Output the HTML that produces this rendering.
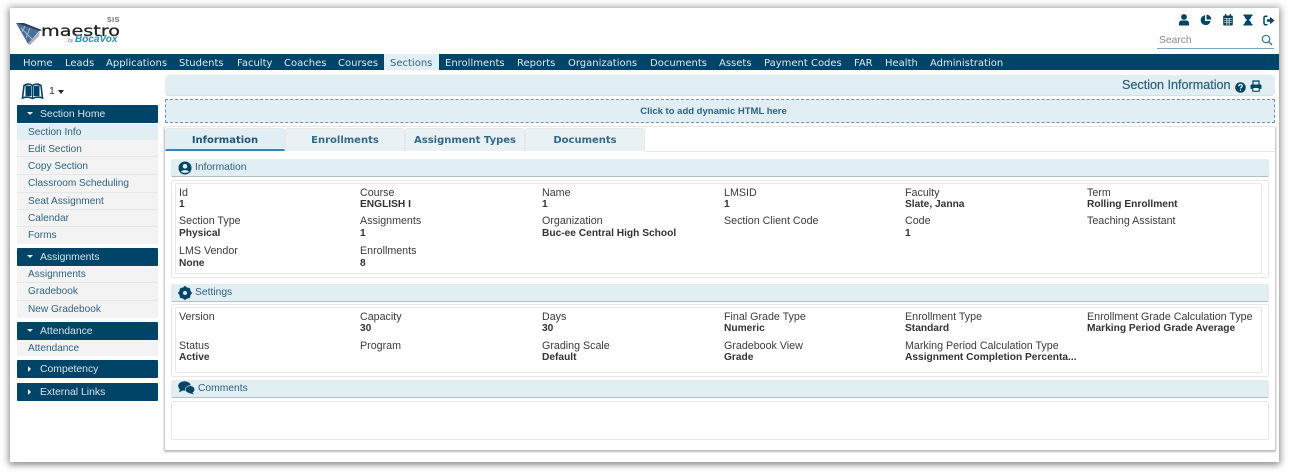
<!DOCTYPE html>
<html><head><meta charset="utf-8"><style>
html,body{margin:0;padding:0;background:#fff;width:1290px;height:474px;overflow:hidden}
body{font-family:"Liberation Sans",sans-serif;position:relative;filter:blur(.35px)}
#w{position:absolute;left:10px;top:8px;width:1269px;height:454px;background:#fff;box-shadow:0 0 7px 2px rgba(0,0,0,.28),0 3px 6px rgba(0,0,0,.25)}
.a{position:absolute;white-space:nowrap}
.n{position:absolute;top:55px;height:16px;font:10px/17px "DejaVu Sans",sans-serif;color:#dfe9ef;white-space:nowrap}
.h{position:absolute;left:17px;width:141px;height:18px;background:#004567;color:#d8e4ea;font-size:10.4px;line-height:20px;border-radius:1px}
.h span{position:absolute;left:23px}
.h i{position:absolute;left:10px}
.dn{top:7px;width:0;height:0;border-left:3px solid transparent;border-right:3px solid transparent;border-top:3px solid #e8eef2}
.rt{top:6px;width:0;height:0;border-top:3px solid transparent;border-bottom:3px solid transparent;border-left:3px solid #e8eef2;left:11px!important}
.s{position:absolute;left:17px;width:141px;background:#f3f3f3;border-bottom:1px solid #e6e6e6;box-sizing:border-box;color:#2f6285;font-size:10.1px}
.s span{position:absolute;left:11px;top:1px;white-space:nowrap}
.t{position:absolute;top:128px;width:119px;height:23px;background:#e9f1f5;border:1px solid #e8e8e8;border-bottom:none;box-sizing:border-box;border-radius:3px 3px 0 0;font:bold 10px/23px "DejaVu Sans",sans-serif;color:#34698c;text-align:center}
.sh{position:absolute;left:171px;width:1098px;height:17px;background:#e1eef3;border-bottom:1px solid #b4bcc0;border-radius:2px;font-size:10.3px;line-height:18px;color:#2c5f80}
.b{position:absolute;border:1px solid #e8e8e8;border-radius:2px;box-sizing:border-box;background:#fff}
.l,.v{position:absolute;font-size:10.7px;line-height:12px;color:#3b3b3b;white-space:nowrap;margin-top:1px}
.v{font-weight:bold;font-size:10.2px;color:#333}
</style></head><body>
<div id="w"></div>

<!-- logo -->
<svg class="a" style="left:15px;top:18px" width="32" height="27" viewBox="0 0 32 27"><path d="M1 5 L25 12 L13 26 Z" fill="#4a6f99"/><path d="M1 5 L9 5 L27 12 L25 13 Z" fill="#2b3f55"/><path d="M13 26 L25 13 L24 18 L15 27 Z" fill="#a9b2ba"/><path d="M6 10 L17 21 M10 8 L7 14 M15 10 L11 20" stroke="#9fb7d0" stroke-width="1"/></svg>
<div class="a" style="left:41px;top:21px;font:15px/20px 'DejaVu Sans',sans-serif;color:#222;transform:scaleX(1.28);transform-origin:0 0;-webkit-text-stroke:.25px #222">maestro</div>
<div class="a" style="left:107px;top:17px;font:bold 7px/8px 'Liberation Sans',sans-serif;color:#666;letter-spacing:.5px">SIS</div>
<div class="a" style="left:68px;top:38px;font:italic 5px/7px 'Liberation Sans',sans-serif;color:#3a89a8">by</div>
<div class="a" style="left:75px;top:34px;font:italic bold 10px/12px 'Liberation Sans',sans-serif;color:#2a8db3">BocaVox</div>

<!-- top icons -->
<svg class="a" style="left:1178px;top:14px" width="12" height="12" viewBox="0 0 12 12"><circle cx="6" cy="3" r="2.9" fill="#004567"/><path d="M1 11.5V9a2.5 2.5 0 0 1 2.5-2.500h5A2.500 2.500 0 0 1 11 9v2.500z" fill="#004567"/></svg>
<svg class="a" style="left:1200px;top:14px" width="12" height="12" viewBox="0 0 12 12"><path d="M5 1.200A5 5 0 1 0 10.600 7H5z" fill="#004567"/><path d="M6.500 .6A5 5 0 0 1 11.400 5.500H6.500z" fill="#004567"/></svg>
<svg class="a" style="left:1223px;top:14px" width="10" height="12" viewBox="0 0 10 12"><rect x=".2" y="1.500" width="9.600" height="10" rx="1" fill="#004567"/><rect x="2" y="0" width="1.300" height="2.500" fill="#004567"/><rect x="6.700" y="0" width="1.300" height="2.500" fill="#004567"/><path d="M1 4.400H9M1 6.500H9M1 8.600H9M3.300 4V11M5 4V11M6.700 4V11" stroke="#fff" stroke-width=".5"/></svg>
<svg class="a" style="left:1243px;top:14px" width="10" height="12" viewBox="0 0 10 12"><path d="M.5 .5H9.500V2H8.500C8.500 4.500 6.500 5 6 6C6.500 7 8.500 7.500 8.500 10H9.500V11.500H.5V10H1.500C1.500 7.500 3.500 7 4 6C3.500 5 1.500 4.500 1.500 2H.5Z" fill="#004567"/></svg>
<svg class="a" style="left:1263px;top:15px" width="12" height="11" viewBox="0 0 12 11"><path d="M4.500 1.200H2.500A1.500 1.500 0 0 0 1 2.700V8.300A1.500 1.500 0 0 0 2.500 9.800H4.500" fill="none" stroke="#004567" stroke-width="1.500"/><path d="M4 4.300H7V1.800L11.500 5.500L7 9.200V6.700H4Z" fill="#004567"/></svg>

<!-- search -->
<div class="a" style="left:1159px;top:35px;font-size:10.3px;line-height:12px;color:#8a8a8a">Search</div>
<div class="a" style="left:1157px;top:48px;width:117px;height:1px;background:#7fa3b9"></div>
<svg class="a" style="left:1261px;top:34px" width="12" height="12" viewBox="0 0 12 12"><circle cx="5" cy="5" r="3.700" fill="none" stroke="#2f7398" stroke-width="1.200"/><path d="M7.800 7.800L11 11" stroke="#2f7398" stroke-width="1.400"/></svg>

<!-- nav -->
<div class="a" style="left:10px;top:54px;width:1269px;height:16px;background:#004567"></div>
<div class="a" style="left:384px;top:54px;width:55px;height:16px;background:#e1eef3"></div>
<div class="n" style="left:23px">Home</div>
<div class="n" style="left:65px">Leads</div>
<div class="n" style="left:106px">Applications</div>
<div class="n" style="left:179px">Students</div>
<div class="n" style="left:237px">Faculty</div>
<div class="n" style="left:284px">Coaches</div>
<div class="n" style="left:338px">Courses</div>
<div class="n" style="left:390px;color:#2f6285">Sections</div>
<div class="n" style="left:445px">Enrollments</div>
<div class="n" style="left:517px">Reports</div>
<div class="n" style="left:568px">Organizations</div>
<div class="n" style="left:650px">Documents</div>
<div class="n" style="left:719px">Assets</div>
<div class="n" style="left:764px">Payment Codes</div>
<div class="n" style="left:854px">FAR</div>
<div class="n" style="left:885px">Health</div>
<div class="n" style="left:930px">Administration</div>

<!-- sidebar top -->
<svg class="a" style="left:21px;top:83px" width="23" height="17" viewBox="0 0 23 17"><path d="M3 2.500C6 .5 9.500 .8 11.500 2.500C13.500 .8 17 .5 20 2.500L21.500 15C17.500 13.500 14 14 11.500 15.500C9 14 5.500 13.500 1.500 15Z" fill="#fff" stroke="#004567" stroke-width="1.600"/><path d="M4.500 2.500V13H10.500V3ZM12.500 3V13H18.500V2.500Z" fill="#004567"/><path d="M11.500 2.500V15.500" stroke="#004567" stroke-width="1"/></svg>
<div class="a" style="left:49px;top:85px;font-size:10.5px;line-height:12px;color:#333">1</div>
<div class="a" style="left:58px;top:90px;width:0;height:0;border-left:3.500px solid transparent;border-right:3.500px solid transparent;border-top:4px solid #222"></div>

<!-- sidebar -->
<div class="h" style="top:105px"><i class="dn"></i><span>Section Home</span></div>
<div class="s" style="top:124px;height:16px;background:#e1eef3;border:none;line-height:15px"><span>Section Info</span></div>
<div class="s" style="top:140px;height:17px;line-height:17px"><span>Edit Section</span></div>
<div class="s" style="top:157px;height:18px;line-height:17px"><span>Copy Section</span></div>
<div class="s" style="top:175px;height:18px;line-height:16px"><span>Classroom Scheduling</span></div>
<div class="s" style="top:193px;height:17px;line-height:15px"><span>Seat Assignment</span></div>
<div class="s" style="top:210px;height:17px;line-height:15px"><span>Calendar</span></div>
<div class="s" style="top:227px;height:17px;line-height:16px;border:none"><span>Forms</span></div>

<div class="h" style="top:248px"><i class="dn"></i><span>Assignments</span></div>
<div class="s" style="top:266px;height:17px;line-height:16px"><span>Assignments</span></div>
<div class="s" style="top:283px;height:18px;line-height:16px"><span>Gradebook</span></div>
<div class="s" style="top:301px;height:17px;line-height:16px;border:none"><span>New Gradebook</span></div>

<div class="h" style="top:322px"><i class="dn"></i><span>Attendance</span></div>
<div class="s" style="top:340px;height:16px;line-height:15px;border:none"><span>Attendance</span></div>

<div class="h" style="top:360px"><i class="rt"></i><span>Competency</span></div>
<div class="h" style="top:383px"><i class="rt"></i><span>External Links</span></div>

<!-- header bars -->
<div class="a" style="left:165px;top:75px;width:1110px;height:21px;background:#e1eef3;border-radius:4px;border-bottom:1px solid #d8dee1;box-sizing:border-box"></div>
<div class="a" style="left:1122px;top:78px;font-size:12.6px;line-height:14px;color:#2c5f80;-webkit-text-stroke:.2px #2c5f80">Section Information</div>
<svg class="a" style="left:1235px;top:82px" width="11" height="11" viewBox="0 0 11 11"><circle cx="5.500" cy="5.500" r="5.300" fill="#004567"/><path d="M3.800 4.200C3.900 2 7.200 2 7.200 4C7.200 5.200 5.500 5.200 5.500 6.400" fill="none" stroke="#fff" stroke-width="1.200"/><rect x="4.900" y="7.400" width="1.200" height="1.300" fill="#fff"/></svg>
<svg class="a" style="left:1250px;top:80px" width="12" height="12" viewBox="0 0 12 12"><path d="M3 5V1H9V5" fill="none" stroke="#004567" stroke-width="1.200"/><rect x=".5" y="4.500" width="11" height="4.500" rx="1" fill="#004567"/><rect x="2.800" y="7.500" width="6.400" height="3.700" fill="#fff" stroke="#004567" stroke-width="1.100"/></svg>

<div class="a" style="left:165px;top:99px;width:1110px;height:24px;background:#e1eef3;border:1px dashed #6f93a8;box-sizing:border-box;text-align:center;font-size:9.5px;font-weight:bold;line-height:23px;color:#2f6285;padding-right:13px">Click to add dynamic HTML here</div>

<!-- main panel -->
<div class="a" style="left:165px;top:127px;width:1110px;height:323px;background:#fff;box-shadow:0 1px 2px 1px rgba(0,0,0,.28)"></div>
<div class="t" style="left:165px;width:120px;background:#e1eef3;color:#235574;border-bottom:2px solid #2f88b3">Information</div>
<div class="t" style="left:285px;width:120px">Enrollments</div>
<div class="t" style="left:405px;width:120px">Assignment Types</div>
<div class="t" style="left:525px;width:120px">Documents</div>
<div class="a" style="left:645px;top:151px;width:630px;height:1px;background:#e8e8e8"></div>

<!-- Information -->
<div class="sh" style="top:159px"><span class="a" style="left:24px">Information</span></div>
<svg class="a" style="left:178px;top:161px" width="14" height="14" viewBox="0 0 14 14"><circle cx="7" cy="7" r="6.500" fill="#004567"/><circle cx="7" cy="5.300" r="2.300" fill="#e1eef3"/><path d="M3 10.800C4 8.600 10 8.600 11 10.800C9.500 12.200 4.500 12.200 3 10.800Z" fill="#e1eef3"/></svg>
<div class="b" style="left:171px;top:180px;width:1098px;height:98px"></div>
<div class="b" style="left:175px;top:183px;width:1087px;height:91px"></div>

<div class="l" style="left:179px;top:186px">Id</div><div class="v" style="left:179px;top:198px">1</div>
<div class="l" style="left:360px;top:186px">Course</div><div class="v" style="left:360px;top:198px">ENGLISH I</div>
<div class="l" style="left:542px;top:186px">Name</div><div class="v" style="left:542px;top:198px">1</div>
<div class="l" style="left:724px;top:186px">LMSID</div><div class="v" style="left:724px;top:198px">1</div>
<div class="l" style="left:905px;top:186px">Faculty</div><div class="v" style="left:905px;top:198px">Slate, Janna</div>
<div class="l" style="left:1087px;top:186px">Term</div><div class="v" style="left:1087px;top:198px">Rolling Enrollment</div>

<div class="l" style="left:179px;top:214px">Section Type</div><div class="v" style="left:179px;top:227px">Physical</div>
<div class="l" style="left:360px;top:214px">Assignments</div><div class="v" style="left:360px;top:227px">1</div>
<div class="l" style="left:542px;top:214px">Organization</div><div class="v" style="left:542px;top:227px">Buc-ee Central High School</div>
<div class="l" style="left:724px;top:214px">Section Client Code</div>
<div class="l" style="left:905px;top:214px">Code</div><div class="v" style="left:905px;top:227px">1</div>
<div class="l" style="left:1087px;top:214px">Teaching Assistant</div>

<div class="l" style="left:179px;top:244px">LMS Vendor</div><div class="v" style="left:179px;top:257px">None</div>
<div class="l" style="left:360px;top:244px">Enrollments</div><div class="v" style="left:360px;top:257px">8</div>

<!-- Settings -->
<div class="sh" style="top:284px"><span class="a" style="left:24px">Settings</span></div>
<svg class="a" style="left:178px;top:286px" width="14" height="14" viewBox="0 0 14 14"><circle cx="7" cy="7" r="4.500" fill="none" stroke="#004567" stroke-width="3"/><path d="M7 .3V13.700M.3 7H13.700M2.300 2.300L11.700 11.700M11.700 2.300L2.300 11.700" stroke="#004567" stroke-width="2.300"/><circle cx="7" cy="7" r="2" fill="#e1eef3"/></svg>
<div class="b" style="left:171px;top:304px;width:1098px;height:73px"></div>
<div class="b" style="left:175px;top:307px;width:1087px;height:66px"></div>

<div class="l" style="left:179px;top:310px">Version</div>
<div class="l" style="left:360px;top:310px">Capacity</div><div class="v" style="left:360px;top:322px">30</div>
<div class="l" style="left:542px;top:310px">Days</div><div class="v" style="left:542px;top:322px">30</div>
<div class="l" style="left:724px;top:310px">Final Grade Type</div><div class="v" style="left:724px;top:322px">Numeric</div>
<div class="l" style="left:905px;top:310px">Enrollment Type</div><div class="v" style="left:905px;top:322px">Standard</div>
<div class="l" style="left:1087px;top:310px">Enrollment Grade Calculation Type</div><div class="v" style="left:1087px;top:322px">Marking Period Grade Average</div>

<div class="l" style="left:179px;top:339px">Status</div><div class="v" style="left:179px;top:351px">Active</div>
<div class="l" style="left:360px;top:339px">Program</div>
<div class="l" style="left:542px;top:339px">Grading Scale</div><div class="v" style="left:542px;top:351px">Default</div>
<div class="l" style="left:724px;top:339px">Gradebook View</div><div class="v" style="left:724px;top:351px">Grade</div>
<div class="l" style="left:905px;top:339px">Marking Period Calculation Type</div><div class="v" style="left:905px;top:351px">Assignment Completion Percenta...</div>

<!-- Comments -->
<div class="sh" style="top:380px"><span class="a" style="left:27px">Comments</span></div>
<svg class="a" style="left:178px;top:381px" width="17" height="14" viewBox="0 0 17 14"><ellipse cx="6.500" cy="5" rx="6.300" ry="4.700" fill="#004567"/><path d="M2 8L1 11.500L5.500 9Z" fill="#004567"/><ellipse cx="12" cy="8.500" rx="4.800" ry="3.800" fill="#004567" stroke="#e1eef3" stroke-width=".6"/><path d="M14 11L16 13.500L11 12Z" fill="#004567"/></svg>
<div class="b" style="left:171px;top:401px;width:1098px;height:39px"></div>
</body></html>
